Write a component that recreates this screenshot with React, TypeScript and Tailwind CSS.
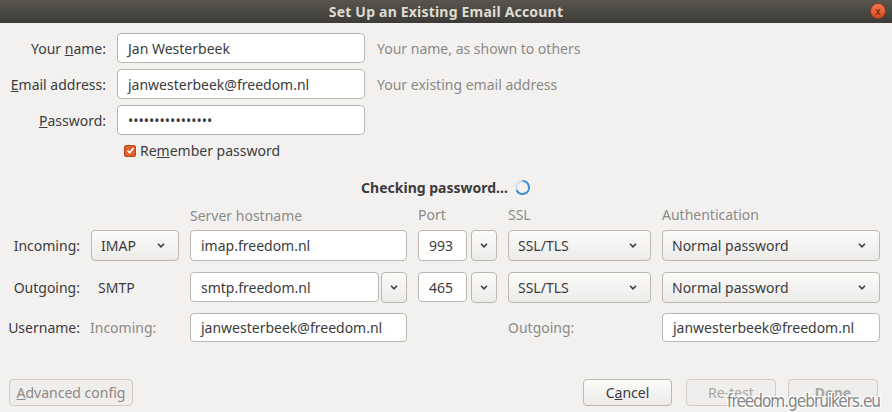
import React from "react"

const Chevron = () => (
  <svg width="10" height="7" viewBox="0 0 10 7" className="shrink-0">
    <path d="M2 1.8 L5 4.8 L8 1.8" fill="none" stroke="#3c3c3c" strokeWidth="1.6" />
  </svg>
)

const Select = ({ text, w }: { text: string; w: string }) => (
  <div className={`${w} h-[31px] flex items-center justify-between pl-[9px] pr-[12px] rounded-[4px] border border-[#bcb8b1] bg-gradient-to-b from-[#fbfbfa] to-[#ecebe9] text-[#3c3c3c]`}>
    <span>{text}</span>
    <Chevron />
  </div>
)

const Input = ({ text, w, h = "h-[31px]" }: { text: string; w: string; h?: string }) => (
  <div className={`${w} ${h} flex items-center px-[10px] rounded-[4px] border border-[#bcb8b1] bg-white text-[#3c3c3c]`}>
    {text}
  </div>
)

const DropBtn = () => (
  <div className="w-[26px] h-[31px] flex items-center justify-center rounded-[4px] border border-[#bcb8b1] bg-gradient-to-b from-[#fbfbfa] to-[#ecebe9]">
    <Chevron />
  </div>
)

export default function App() {
  return (
    <div className="w-[892px] h-[412px] overflow-hidden bg-[#f2f1f0] text-[14px] text-[#3c3c3c] relative" style={{ fontFamily: "'Noto Sans', sans-serif" }}>
      {/* title bar */}
      <div className="h-[23px] bg-gradient-to-b from-[#58564f] to-[#3c3b37] flex items-center justify-center relative">
        <span className="font-bold text-[#dfdbd2] text-[14px] tracking-[0.2px]">Set Up an Existing Email Account</span>
        <div className="absolute right-[6px] top-[3px] w-[16px] h-[16px] rounded-full bg-gradient-to-b from-[#f07a4e] to-[#d9481b] border border-[#9e3a1a] flex items-center justify-center text-[10px] leading-none text-[#4a1a0a]">x</div>
      </div>

      {/* identity */}
      <div className="pt-[10px] flex flex-col gap-[6px]">
        <div className="flex items-center">
          <div className="w-[106px] text-right">Your <u>n</u>ame:</div>
          <div className="ml-[11px]"><Input text="Jan Westerbeek" w="w-[248px]" h="h-[30px]" /></div>
          <div className="ml-[12px] text-[#8b8a86]">Your name, as shown to others</div>
        </div>
        <div className="flex items-center">
          <div className="w-[106px] text-right"><u>E</u>mail address:</div>
          <div className="ml-[11px]"><Input text="janwesterbeek@freedom.nl" w="w-[248px]" h="h-[30px]" /></div>
          <div className="ml-[12px] text-[#8b8a86]">Your existing email address</div>
        </div>
        <div className="flex items-center">
          <div className="w-[106px] text-right"><u>P</u>assword:</div>
          <div className="ml-[11px]"><Input text="••••••••••••••••" w="w-[248px]" h="h-[30px]" /></div>
        </div>
        <div className="flex items-center pl-[124px] gap-[4px] -mt-[1px]">
          <div className="w-[12px] h-[12px] rounded-[2px] bg-[#e0612f] border border-[#b84a22] flex items-center justify-center">
            <svg width="9" height="9" viewBox="0 0 9 9"><path d="M1.5 4.5 L3.7 6.7 L7.5 2" fill="none" stroke="white" strokeWidth="1.6" /></svg>
          </div>
          <span>Re<u>m</u>ember password</span>
        </div>
      </div>

      {/* status */}
      <div className="mt-[16px] flex items-center justify-center gap-[6px]">
        <span className="font-bold">Checking password...</span>
        <svg width="17" height="17" viewBox="0 0 17 17">
          <circle cx="8.5" cy="8.5" r="6.5" fill="none" stroke="#cfe0f2" strokeWidth="2" />
          <path d="M8.5 2 A6.5 6.5 0 1 1 2.5 11" fill="none" stroke="#3d8fd6" strokeWidth="2" />
        </svg>
      </div>

      {/* server settings */}
      <div className="mt-[6px] grid grid-cols-[80px_88px_217px_79px_143px_218px] gap-x-[11px] items-center">
        <div />
        <div />
        <div className="text-[#8b8a86] h-[19px]">Server hostname</div>
        <div className="text-[#8b8a86]">Port</div>
        <div className="text-[#8b8a86]">SSL</div>
        <div className="text-[#8b8a86]">Authentication</div>

        <div className="text-right mt-[5px]">Incoming:</div>
        <div className="mt-[5px]"><Select text="IMAP" w="w-[88px]" /></div>
        <div className="mt-[5px]"><Input text="imap.freedom.nl" w="w-[217px]" /></div>
        <div className="mt-[5px] flex gap-[4px]"><Input text="993" w="w-[49px]" /><DropBtn /></div>
        <div className="mt-[5px]"><Select text="SSL/TLS" w="w-[143px]" /></div>
        <div className="mt-[5px]"><Select text="Normal password" w="w-[218px]" /></div>

        <div className="text-right mt-[11px]">Outgoing:</div>
        <div className="mt-[11px] pl-[7px]">SMTP</div>
        <div className="mt-[11px] flex gap-[2px]"><Input text="smtp.freedom.nl" w="w-[189px]" h="h-[30px]" /><DropBtn /></div>
        <div className="mt-[11px] flex gap-[4px]"><Input text="465" w="w-[49px]" h="h-[30px]" /><DropBtn /></div>
        <div className="mt-[11px]"><Select text="SSL/TLS" w="w-[143px]" /></div>
        <div className="mt-[11px]"><Select text="Normal password" w="w-[218px]" /></div>

        <div className="text-right mt-[10px]">Username:</div>
        <div className="mt-[10px] text-[#8b8a86] -ml-[1px]">Incoming:</div>
        <div className="mt-[10px]"><Input text="janwesterbeek@freedom.nl" w="w-[217px]" h="h-[29px]" /></div>
        <div className="mt-[10px]" />
        <div className="mt-[10px] text-[#8b8a86]">Outgoing:</div>
        <div className="mt-[10px]"><Input text="janwesterbeek@freedom.nl" w="w-[218px]" h="h-[29px]" /></div>
      </div>

      {/* buttons */}
      <div className="absolute left-[9px] right-[14px] bottom-[6px] flex items-center">
        <div className="w-[124px] h-[27px] flex items-center justify-center rounded-[4px] border border-[#cfccc7] bg-[#efeeec] text-[#8b8a86]"><span><u>A</u>dvanced config</span></div>
        <div className="flex-1" />
        <div className="w-[89px] h-[27px] flex items-center justify-center rounded-[4px] border border-[#bcb8b1] bg-gradient-to-b from-[#fbfbfa] to-[#ecebe9]"><span>C<u>a</u>ncel</span></div>
        <div className="ml-[14px] w-[90px] h-[27px] flex items-center justify-center rounded-[4px] border border-[#cfccc7] bg-[#efeeec] text-[#a9a7a3]">Re-test</div>
        <div className="ml-[12px] w-[90px] h-[27px] flex items-center justify-center rounded-[4px] border border-[#cfccc7] bg-[#efeeec] text-[#a9a7a3] font-bold">Done</div>
      </div>

      {/* watermark */}
      <div
        className="absolute right-[12px] bottom-[2px] text-[17px] text-[#858585] leading-none tracking-[-1px]"
        style={{ fontFamily: "'DejaVu Sans Condensed', 'DejaVu Sans', sans-serif", fontStretch: "condensed", textShadow: "1px 1px 0 #fff, -1px -1px 0 #fff, 1px -1px 0 #fff, -1px 1px 0 #fff" }}
      >
        freedom.gebruikers.eu
      </div>
    </div>
  )
}
